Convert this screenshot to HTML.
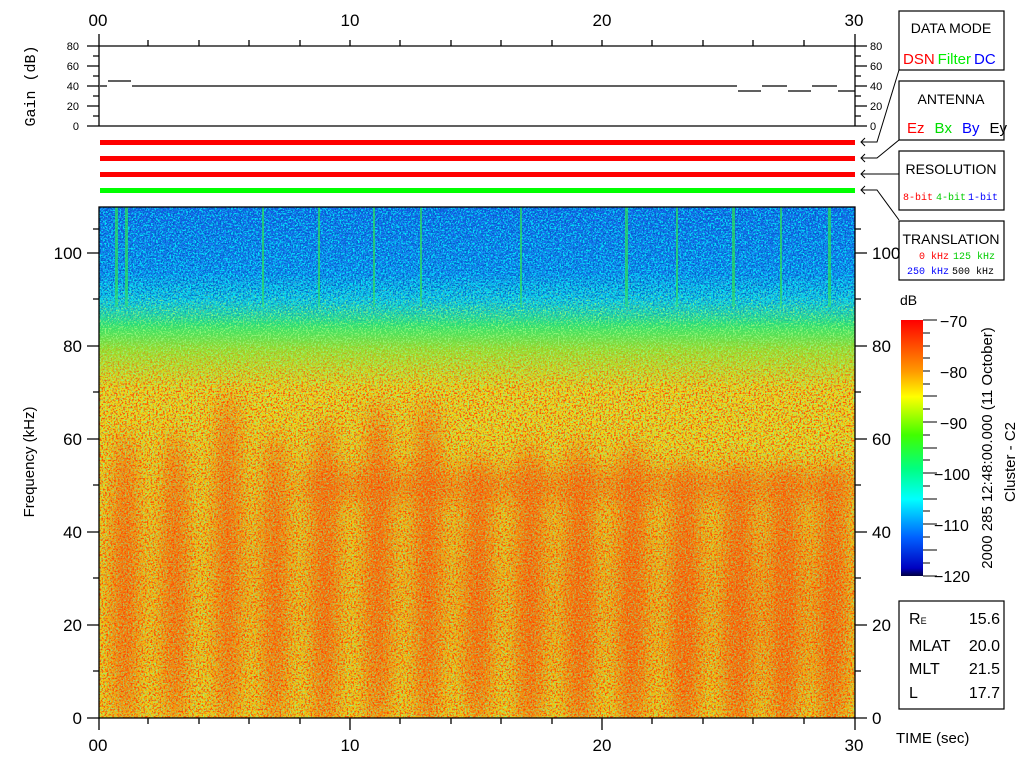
<!DOCTYPE html>
<html><head><meta charset="utf-8"><style>
html,body{margin:0;padding:0;background:#fff;width:1024px;height:768px;overflow:hidden}
svg{display:block}
text{font-family:"Liberation Sans",sans-serif}
.m{font-family:"Liberation Mono",monospace}
</style></head><body>
<svg width="1024" height="768" viewBox="0 0 1024 768" xmlns="http://www.w3.org/2000/svg">
<defs>
<linearGradient id="bg" x1="0" y1="0" x2="0" y2="1">
<stop offset="0" stop-color="#1a5aea"/>
<stop offset="0.13" stop-color="#1880f0"/>
<stop offset="0.18" stop-color="#10c0e8"/>
<stop offset="0.23" stop-color="#30e070"/>
<stop offset="0.28" stop-color="#90e030"/>
<stop offset="0.36" stop-color="#e8d820"/>
<stop offset="1" stop-color="#ecd018"/>
</linearGradient>
<linearGradient id="cb" x1="0" y1="0" x2="0" y2="1">
<stop offset="0" stop-color="#ff0000"/>
<stop offset="0.2" stop-color="#ff9900"/>
<stop offset="0.3" stop-color="#ffff00"/>
<stop offset="0.45" stop-color="#40ff00"/>
<stop offset="0.58" stop-color="#00ff80"/>
<stop offset="0.7" stop-color="#00ffff"/>
<stop offset="0.85" stop-color="#0060ff"/>
<stop offset="0.97" stop-color="#0000c0"/>
<stop offset="1" stop-color="#000040"/>
</linearGradient>
<linearGradient id="fade" x1="0" y1="0" x2="0" y2="1">
<stop offset="0" stop-color="#fff" stop-opacity="0"/>
<stop offset="0.25" stop-color="#fff" stop-opacity="0"/>
<stop offset="0.36" stop-color="#fff" stop-opacity="1"/>
<stop offset="1" stop-color="#fff" stop-opacity="1"/>
</linearGradient>
<mask id="lower"><rect x="99" y="207" width="756" height="511" fill="url(#fade)"/></mask>
<linearGradient id="midg" x1="0" y1="0" x2="0" y2="1">
<stop offset="0" stop-color="#000"/>
<stop offset="0.13" stop-color="#000"/>
<stop offset="0.2" stop-color="#fff"/>
<stop offset="1" stop-color="#fff"/>
</linearGradient>
<mask id="mid"><rect x="99" y="207" width="756" height="511" fill="url(#midg)"/></mask>
<linearGradient id="topg" x1="0" y1="0" x2="0" y2="1">
<stop offset="0" stop-color="#fff"/>
<stop offset="0.16" stop-color="#fff"/>
<stop offset="0.24" stop-color="#000"/>
<stop offset="1" stop-color="#000"/>
</linearGradient>
<mask id="upper"><rect x="99" y="207" width="756" height="511" fill="url(#topg)"/></mask>
<filter id="nr" x="0" y="0" width="1" height="1"><feTurbulence type="fractalNoise" baseFrequency="0.55" numOctaves="2" seed="4"/><feColorMatrix type="matrix" values="0 0 0 0 1  0 0 0 0 0.05  0 0 0 0 0  9 0 0 0 -4.6"/></filter>
<filter id="no" x="0" y="0" width="1" height="1"><feTurbulence type="fractalNoise" baseFrequency="0.6" numOctaves="2" seed="12"/><feColorMatrix type="matrix" values="0 0 0 0 1  0 0 0 0 0.6  0 0 0 0 0  9 0 0 0 -4.5"/></filter>
<filter id="ng" x="0" y="0" width="1" height="1"><feTurbulence type="fractalNoise" baseFrequency="0.6" numOctaves="2" seed="9"/><feColorMatrix type="matrix" values="0 0 0 0 0.3  0 0 0 0 0.95  0 0 0 0 0.2  9 0 0 0 -4.7"/></filter>
<filter id="nb" x="0" y="0" width="1" height="1"><feTurbulence type="fractalNoise" baseFrequency="0.6" numOctaves="2" seed="2"/><feColorMatrix type="matrix" values="0 0 0 0 0  0 0 0 0 0.1  0 0 0 0 0.55  9 0 0 0 -4.6"/></filter>
<filter id="nc" x="0" y="0" width="1" height="1"><feTurbulence type="fractalNoise" baseFrequency="0.6" numOctaves="2" seed="7"/><feColorMatrix type="matrix" values="0 0 0 0 0  0 0 0 0 0.95  0 0 0 0 0.95  9 0 0 0 -4.3"/></filter>
<filter id="bl"><feGaussianBlur stdDeviation="10"/></filter>
<clipPath id="sp"><rect x="99" y="207" width="756" height="511"/></clipPath>
</defs>

<g font-size="17" text-anchor="middle">
<text x="98" y="26">00</text><text x="350" y="26">10</text><text x="602" y="26">20</text><text x="854" y="26">30</text>
<text x="98" y="751">00</text><text x="350" y="751">10</text><text x="602" y="751">20</text><text x="854" y="751">30</text>
</g>

<g stroke="#000" stroke-width="1.3" fill="none">
<path d="M87 46H855M87 126H855M99 34V126M855 34V126"/>
<path d="M148 40V46M199 40V46M249 40V46M300 40V46M350 40V46M400 40V46M451 40V46M501 40V46M552 40V46M602 40V46M652 40V46M703 40V46M753 40V46M804 40V46"/>
<path d="M87 66H99M87 86H99M87 106H99M93 56H99M93 76H99M93 96H99M93 116H99"/>
<path d="M855 46H867M855 66H867M855 86H867M855 106H867M855 126H867M855 56H861M855 76H861M855 96H861M855 116H861"/>
<path d="M100 86H107M108 81H131M132 86H737M738 91H761M762 86H787M788 91H811M812 86H837M838 91H855"/>
</g>
<g class="m" font-size="11" text-anchor="end">
<text x="79" y="50">80</text><text x="79" y="70">60</text><text x="79" y="90">40</text><text x="79" y="110">20</text><text x="79" y="130">0</text>
</g>
<g class="m" font-size="11">
<text x="870" y="50">80</text><text x="870" y="70">60</text><text x="870" y="90">40</text><text x="870" y="110">20</text><text x="870" y="130">0</text>
</g>
<text class="m" font-size="15" transform="translate(35 86) rotate(-90)" text-anchor="middle">Gain (dB)</text>

<rect x="100" y="140" width="755" height="5" fill="#ff0000"/>
<rect x="100" y="156" width="755" height="5" fill="#ff0000"/>
<rect x="100" y="172" width="755" height="5" fill="#ff0000"/>
<rect x="100" y="188" width="755" height="5" fill="#00ff00"/>

<g stroke="#000" stroke-width="1" fill="none">
<path d="M899 70L877 142H861M865 138L861 142L865 146"/>
<path d="M899 140L877 158H861M865 154L861 158L865 162"/>
<path d="M899 174H861M865 170L861 174L865 178"/>
<path d="M899 220L877 190H861M865 186L861 190L865 194"/>
</g>

<g fill="none" stroke="#000" stroke-width="1.2">
<rect x="899" y="11" width="105" height="59"/>
<rect x="899" y="81" width="105" height="59"/>
<rect x="899" y="151" width="105" height="59"/>
<rect x="899" y="221" width="105" height="59"/>
<rect x="899" y="601" width="105" height="108"/>
</g>
<g font-size="14" text-anchor="middle">
<text x="951" y="33">DATA MODE</text>
<text x="951" y="104">ANTENNA</text>
<text x="951" y="174">RESOLUTION</text>
<text x="951" y="244">TRANSLATION</text>
</g>
<text x="903" y="64" font-size="15"><tspan fill="#ff0000">DSN</tspan><tspan fill="#00ee00" dx="3">Filter</tspan><tspan fill="#0000ff" dx="3">DC</tspan></text>
<text x="907" y="133" font-size="15"><tspan fill="#ff0000">Ez</tspan><tspan fill="#00dd00" dx="10">Bx</tspan><tspan fill="#0000ff" dx="10">By</tspan><tspan fill="#000" dx="10">Ey</tspan></text>
<text class="m" x="903" y="200" font-size="10"><tspan fill="#ff0000">8-bit</tspan><tspan fill="#00cc00" dx="3">4-bit</tspan><tspan fill="#0000ff" dx="2">1-bit</tspan></text>
<text class="m" x="919" y="259" font-size="10"><tspan fill="#ff0000">0 kHz</tspan><tspan fill="#00cc00" dx="4">125 kHz</tspan></text>
<text class="m" x="907" y="274" font-size="10"><tspan fill="#0000ff">250 kHz</tspan><tspan fill="#000" dx="3">500 kHz</tspan></text>

<g clip-path="url(#sp)">
<rect x="99" y="207" width="756" height="511" fill="url(#bg)"/>
<g mask="url(#mid)">
<rect x="99" y="207" width="756" height="511" filter="url(#ng)" opacity="0.9"/>
</g>
<g mask="url(#lower)">
<rect x="99" y="207" width="756" height="511" filter="url(#no)" opacity="0.7"/>
<g filter="url(#bl)" fill="#ff2000" opacity="0.6">
<ellipse cx="125" cy="580" rx="13" ry="150"/><ellipse cx="175" cy="580" rx="13" ry="150"/>
<ellipse cx="228" cy="560" rx="13" ry="170"/><ellipse cx="275" cy="580" rx="13" ry="150"/>
<ellipse cx="325" cy="580" rx="14" ry="160"/><ellipse cx="378" cy="570" rx="14" ry="170"/>
<ellipse cx="428" cy="570" rx="14" ry="170"/><ellipse cx="478" cy="590" rx="15" ry="140"/>
<ellipse cx="530" cy="590" rx="15" ry="150"/><ellipse cx="580" cy="590" rx="16" ry="150"/>
<ellipse cx="632" cy="590" rx="16" ry="150"/><ellipse cx="685" cy="600" rx="17" ry="140"/>
<ellipse cx="738" cy="600" rx="17" ry="140"/><ellipse cx="785" cy="600" rx="17" ry="140"/>
<ellipse cx="832" cy="600" rx="16" ry="140"/>
<rect x="300" y="470" width="555" height="30" opacity="0.6"/>
</g>
<rect x="99" y="207" width="756" height="511" filter="url(#nr)" opacity="0.85"/>
<rect x="99" y="207" width="756" height="511" filter="url(#ng)" opacity="0.45"/>
</g>
<g mask="url(#upper)">
<rect x="99" y="207" width="756" height="511" filter="url(#nc)" opacity="0.8"/>
<rect x="99" y="207" width="756" height="511" filter="url(#nb)" opacity="0.85"/>
<g fill="#30e050" opacity="0.7">
<rect x="115" y="207" width="3" height="100"/><rect x="125" y="207" width="3" height="100"/>
<rect x="262" y="207" width="2" height="100"/><rect x="318" y="207" width="2" height="100"/>
<rect x="373" y="207" width="2" height="100"/><rect x="420" y="207" width="2" height="100"/>
<rect x="520" y="207" width="2" height="100"/><rect x="625" y="207" width="3" height="100"/>
<rect x="676" y="207" width="2" height="100"/><rect x="732" y="207" width="3" height="100"/>
<rect x="780" y="207" width="2" height="100"/><rect x="828" y="207" width="3" height="100"/>
</g>
</g>
</g>
<g stroke="#000" stroke-width="1.3" fill="none">
<rect x="99" y="207" width="756" height="511"/>
<path d="M99 718V730M350 718V730M602 718V730M855 718V730M148 718V724M199 718V724M249 718V724M300 718V724M400 718V724M451 718V724M501 718V724M552 718V724M652 718V724M703 718V724M753 718V724M804 718V724"/>
<path d="M87 718H99M87 625H99M87 532H99M87 439H99M87 346H99M87 253H99M93 671H99M93 578H99M93 485H99M93 392H99M93 299H99M93 229H99"/>
<path d="M855 718H867M855 625H867M855 532H867M855 439H867M855 346H867M855 253H867M855 671H861M855 578H861M855 485H861M855 392H861M855 299H861M855 229H861"/>
</g>
<g font-size="17" text-anchor="end">
<text x="82" y="724">0</text><text x="82" y="631">20</text><text x="82" y="538">40</text><text x="82" y="445">60</text><text x="82" y="352">80</text><text x="82" y="259">100</text>
</g>
<g font-size="17">
<text x="872" y="724">0</text><text x="872" y="631">20</text><text x="872" y="538">40</text><text x="872" y="445">60</text><text x="872" y="352">80</text><text x="872" y="259">100</text>
</g>
<text font-size="15" transform="translate(34 462) rotate(-90)" text-anchor="middle">Frequency (kHz)</text>

<text x="900" y="305" font-size="14">dB</text>
<rect x="901" y="320" width="22" height="256" fill="url(#cb)"/>
<g stroke="#000" stroke-width="1" fill="none">
<path d="M923 320H937M923 396H937M923 422H937M923 448H937M923 473H937M923 499H937M923 524H937M923 550H937M923 576H937"/>
<path d="M923 333H930M923 346H930M923 358H930M923 371H930M923 384H930M923 409H930M923 435H930M923 460H930M923 486H930M923 511H930M923 537H930M923 563H930"/>
</g>
<g font-size="16">
<text x="940" y="327">−70</text><text x="940" y="378">−80</text><text x="940" y="429">−90</text><text x="934" y="480">−100</text><text x="934" y="531">−110</text><text x="934" y="582">−120</text>
</g>
<text font-size="15" transform="translate(992 448) rotate(-90)" text-anchor="middle">2000 285 12:48:00.000 (11 October)</text>
<text font-size="15" transform="translate(1015 462) rotate(-90)" text-anchor="middle">Cluster - C2</text>

<g font-size="16">
<text x="909" y="624">R<tspan font-size="9">E</tspan></text><text x="1000" y="624" text-anchor="end">15.6</text>
<text x="909" y="651">MLAT</text><text x="1000" y="651" text-anchor="end">20.0</text>
<text x="909" y="674">MLT</text><text x="1000" y="674" text-anchor="end">21.5</text>
<text x="909" y="698">L</text><text x="1000" y="698" text-anchor="end">17.7</text>
</g>
<text x="896" y="743" font-size="15">TIME (sec)</text>
</svg>
</body></html>
